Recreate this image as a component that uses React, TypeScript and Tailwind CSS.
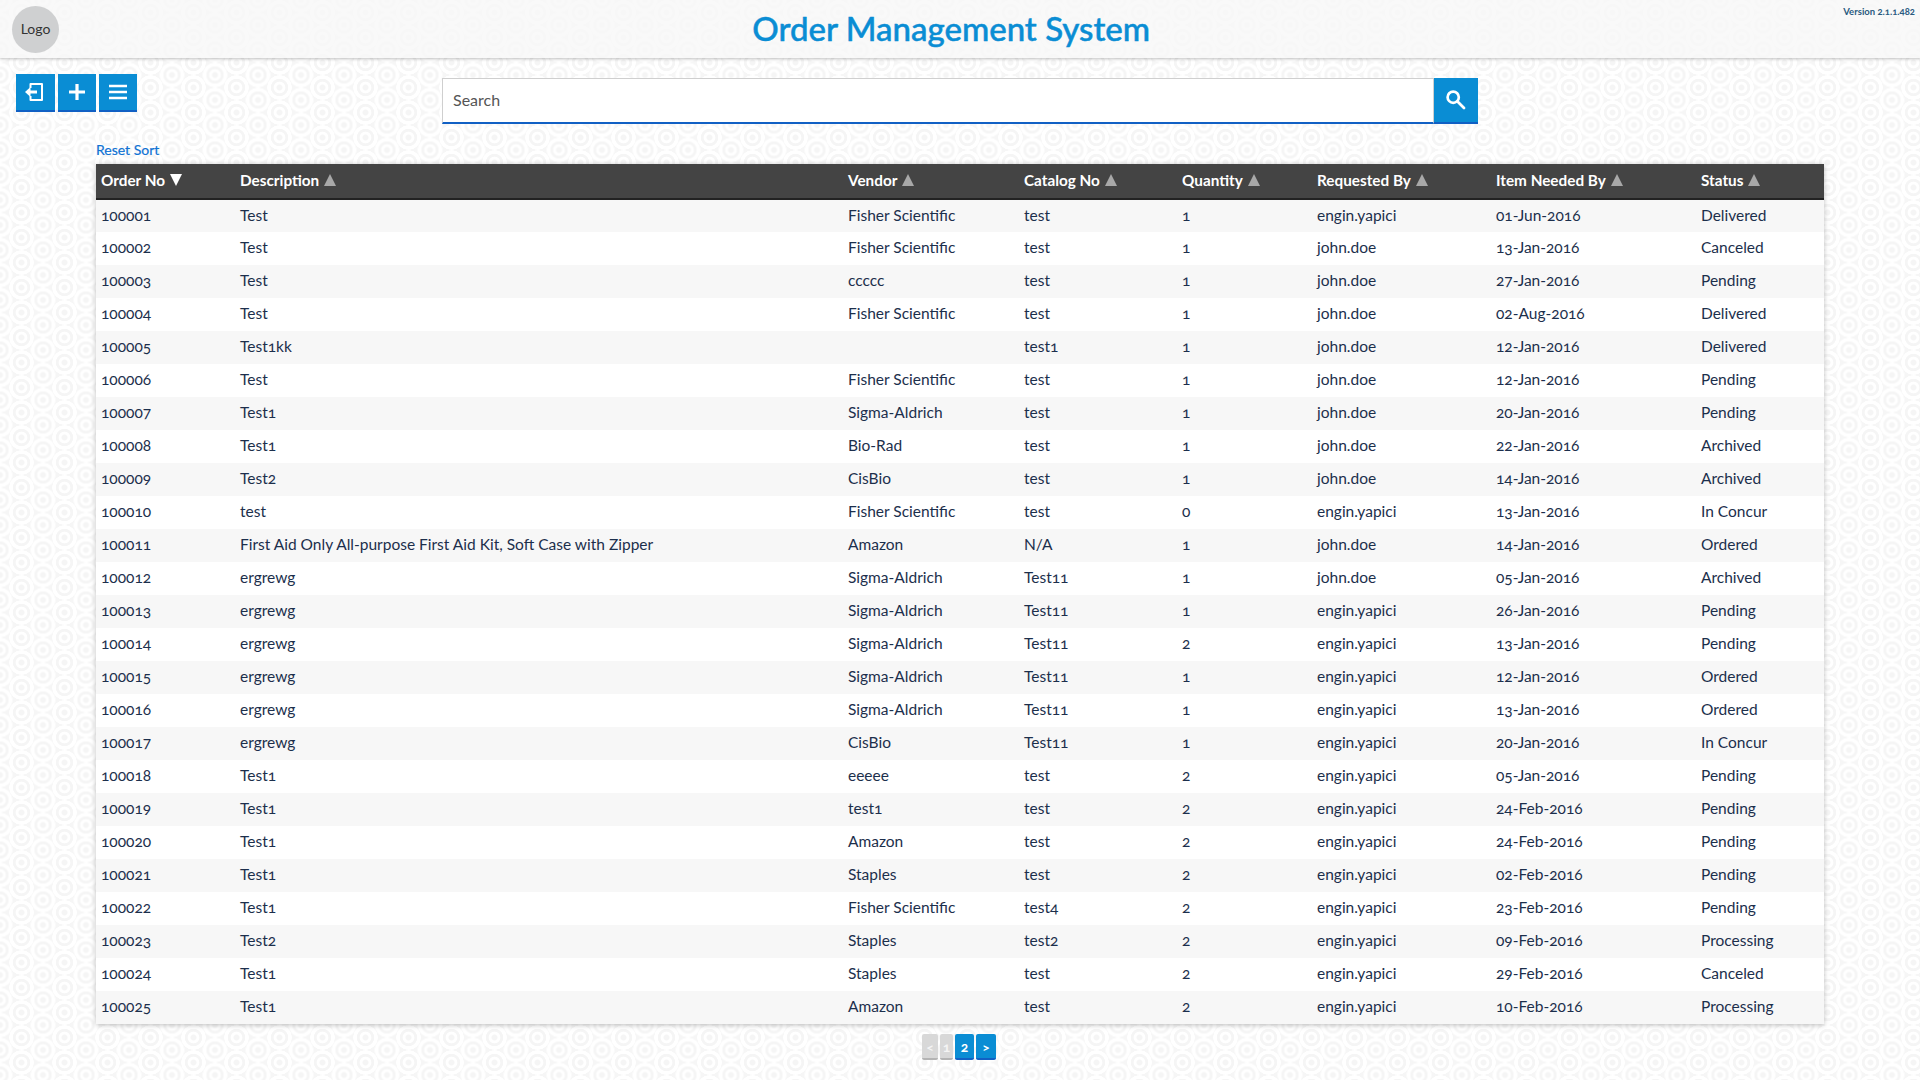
const columns = [
  { label: 'Order No', width: 'w-[139px]', active: true },
  { label: 'Description', width: 'w-[608px]' },
  { label: 'Vendor', width: 'w-[176px]' },
  { label: 'Catalog No', width: 'w-[158px]' },
  { label: 'Quantity', width: 'w-[135px]' },
  { label: 'Requested By', width: 'w-[179px]' },
  { label: 'Item Needed By', width: 'w-[205px]' },
  { label: 'Status', width: 'w-[128px]' },
];

const FS = 'Fisher Scientific';
const SA = 'Sigma-Aldrich';
const EY = 'engin.yapici';
const JD = 'john.doe';

const rows = [
  ['100001', 'Test', FS, 'test', '1', EY, '01-Jun-2016', 'Delivered'],
  ['100002', 'Test', FS, 'test', '1', JD, '13-Jan-2016', 'Canceled'],
  ['100003', 'Test', 'ccccc', 'test', '1', JD, '27-Jan-2016', 'Pending'],
  ['100004', 'Test', FS, 'test', '1', JD, '02-Aug-2016', 'Delivered'],
  ['100005', 'Test1kk', '', 'test1', '1', JD, '12-Jan-2016', 'Delivered'],
  ['100006', 'Test', FS, 'test', '1', JD, '12-Jan-2016', 'Pending'],
  ['100007', 'Test1', SA, 'test', '1', JD, '20-Jan-2016', 'Pending'],
  ['100008', 'Test1', 'Bio-Rad', 'test', '1', JD, '22-Jan-2016', 'Archived'],
  ['100009', 'Test2', 'CisBio', 'test', '1', JD, '14-Jan-2016', 'Archived'],
  ['100010', 'test', FS, 'test', '0', EY, '13-Jan-2016', 'In Concur'],
  ['100011', 'First Aid Only All-purpose First Aid Kit, Soft Case with Zipper', 'Amazon', 'N/A', '1', JD, '14-Jan-2016', 'Ordered'],
  ['100012', 'ergrewg', SA, 'Test11', '1', JD, '05-Jan-2016', 'Archived'],
  ['100013', 'ergrewg', SA, 'Test11', '1', EY, '26-Jan-2016', 'Pending'],
  ['100014', 'ergrewg', SA, 'Test11', '2', EY, '13-Jan-2016', 'Pending'],
  ['100015', 'ergrewg', SA, 'Test11', '1', EY, '12-Jan-2016', 'Ordered'],
  ['100016', 'ergrewg', SA, 'Test11', '1', EY, '13-Jan-2016', 'Ordered'],
  ['100017', 'ergrewg', 'CisBio', 'Test11', '1', EY, '20-Jan-2016', 'In Concur'],
  ['100018', 'Test1', 'eeeee', 'test', '2', EY, '05-Jan-2016', 'Pending'],
  ['100019', 'Test1', 'test1', 'test', '2', EY, '24-Feb-2016', 'Pending'],
  ['100020', 'Test1', 'Amazon', 'test', '2', EY, '24-Feb-2016', 'Pending'],
  ['100021', 'Test1', 'Staples', 'test', '2', EY, '02-Feb-2016', 'Pending'],
  ['100022', 'Test1', FS, 'test4', '2', EY, '23-Feb-2016', 'Pending'],
  ['100023', 'Test2', 'Staples', 'test2', '2', EY, '09-Feb-2016', 'Processing'],
  ['100024', 'Test1', 'Staples', 'test', '2', EY, '29-Feb-2016', 'Canceled'],
  ['100025', 'Test1', 'Amazon', 'test', '2', EY, '10-Feb-2016', 'Processing'],
];

function SortArrow({ active }: { active?: boolean }) {
  return (
    <svg width="12" height="12" viewBox="0 0 12 12" className={active ? 'fill-white' : 'fill-[#a8a8a8]'}>
      {active ? <path d="M0 0h12L6 12z" /> : <path d="M6 0l6 12H0z" />}
    </svg>
  );
}

function ToolButton({ children, w }: { children: React.ReactNode; w: string }) {
  return (
    <button className={`${w} h-[38px] flex items-center justify-center bg-[#0a8dd4] border-b-2 border-[#1160c4]`}>
      {children}
    </button>
  );
}

function PageButton({ label, w, on }: { label: string; w: string; on?: boolean }) {
  return (
    <span
      className={`${w} h-[26px] flex items-center justify-center rounded-[2px] border-b-2 text-[14px] font-bold ${
        on ? 'bg-[#0a8dd4] border-[#1160c4] text-white' : 'bg-[#d8d8d8] border-[#b4b4b4] text-[#f4f4f4]'
      }`}
    >
      {label}
    </span>
  );
}

export default function App() {
  return (
    <div className="min-h-screen h-[1080px] overflow-hidden font-['Lato',sans-serif] oldstyle-nums text-[#1c2f4c] bg-[#f6f6f6] [background-image:radial-gradient(circle,#f5f5f5_2.5px,#fff_3.5px,#fff_5.5px,#f5f5f5_6.2px,#f5f5f5_8.3px,#fff_9px,#fff_12px,transparent_12.5px),radial-gradient(circle,#f5f5f5_2.5px,#fff_3.5px,#fff_5.5px,#f5f5f5_6.2px,#f5f5f5_8.3px,#fff_9px,#fff_12px,transparent_12.5px)] [background-size:43px_25px] [background-position:0_0,21.5px_12.5px]">
      {/* Header */}
      <header className="h-[58px] flex items-center pl-3 pr-[5px] bg-[#f7f7f7]/80 shadow-[0_1px_3px_rgba(0,0,0,0.25)]">
        <div className="w-[47px] h-[47px] rounded-full bg-[#cfd0d1] flex items-center justify-center pb-[2px] text-[14px] text-[#333]">
          Logo
        </div>
        <h1 className="flex-1 text-center pb-[1px] text-[33px] font-medium text-[#0a8dd4] [-webkit-text-stroke:0.5px_#0a8dd4]">
          Order Management System
        </h1>
        <div className="self-start mt-[5px] text-[9.5px] font-bold text-[#2a5a80]">Version 2.1.1.482</div>
      </header>

      {/* Toolbar */}
      <div className="flex items-start pl-4 pt-4">
        <div className="flex gap-[3px]">
          <ToolButton w="w-[39px]">
            <svg width="18" height="18" viewBox="0 0 18 18" fill="none" stroke="white" strokeWidth="2" className="mr-[3px]">
              <path d="M5.5 5V1H17V17H5.5V13" strokeLinejoin="round" />
              <path d="M3 9H12" strokeWidth="3" />
              <path d="M0 9L5.5 4V14z" fill="white" stroke="none" />
            </svg>
          </ToolButton>
          <ToolButton w="w-[38px]">
            <svg width="18" height="18" viewBox="0 0 18 18" stroke="white" strokeWidth="3.2">
              <path d="M9 1v16M1 9h16" />
            </svg>
          </ToolButton>
          <ToolButton w="w-[38px]">
            <svg width="20" height="16" viewBox="0 0 20 16" stroke="white" strokeWidth="2.6">
              <path d="M1 2h18M1 8h18M1 14h18" />
            </svg>
          </ToolButton>
        </div>
        <div className="ml-[305px] mt-1 flex w-[1036px] h-[46px]">
          <input
            placeholder="Search"
            className="flex-1 bg-white border border-[#cfcfcf] border-b-2 border-b-[#1160c4] pl-[10px] pb-[2px] text-[16px] outline-none placeholder:text-[#555]"
          />
          <button className="w-11 flex items-center justify-center bg-[#0a8dd4] border-b-2 border-[#1160c4]">
            <svg width="20" height="20" viewBox="0 0 20 20" fill="none" stroke="white">
              <circle cx="7.2" cy="7.2" r="5.6" strokeWidth="2.7" />
              <path d="M11.5 11.5L18 18" strokeWidth="2.8" strokeLinecap="round" />
            </svg>
          </button>
        </div>
      </div>

      {/* Table */}
      <div className="mx-[96px]">
        <a className="block mt-[15px] h-[25px] text-[14px] text-[#0f72d4] [-webkit-text-stroke:0.2px_#0f72d4]">Reset Sort</a>
        <table className="w-full table-fixed border-collapse text-[15.5px] shadow-[0_1px_5px_rgba(0,0,0,0.25)]">
          <colgroup>
            {columns.map((c) => (
              <col key={c.label} className={c.width} />
            ))}
          </colgroup>
          <thead>
            <tr className="h-[35px] bg-[#444444] border-b-2 border-[#222222] text-white text-[15.3px]">
              {columns.map((c) => (
                <th key={c.label} className="pl-[5px] pb-[2px] text-left font-bold">
                  <span className="inline-flex items-center gap-[5px]">
                    {c.label}
                    <SortArrow active={c.active} />
                  </span>
                </th>
              ))}
            </tr>
          </thead>
          <tbody>
            {rows.map((r) => (
              <tr key={r[0]} className="h-[33px] odd:bg-[#f7f7f7] even:bg-white">
                {r.map((v, i) => (
                  <td key={i} className="pl-[5px] pb-[1px] truncate">
                    {v}
                  </td>
                ))}
              </tr>
            ))}
          </tbody>
        </table>
      </div>

      {/* Pagination */}
      <div className="mt-[10px] ml-[922px] flex gap-[2px]">
        <PageButton label="<" w="w-[16px]" />
        <PageButton label="1" w="w-[13px]" />
        <PageButton label="2" w="w-[19px]" on />
        <PageButton label=">" w="w-[20px]" on />
      </div>
    </div>
  );
}
